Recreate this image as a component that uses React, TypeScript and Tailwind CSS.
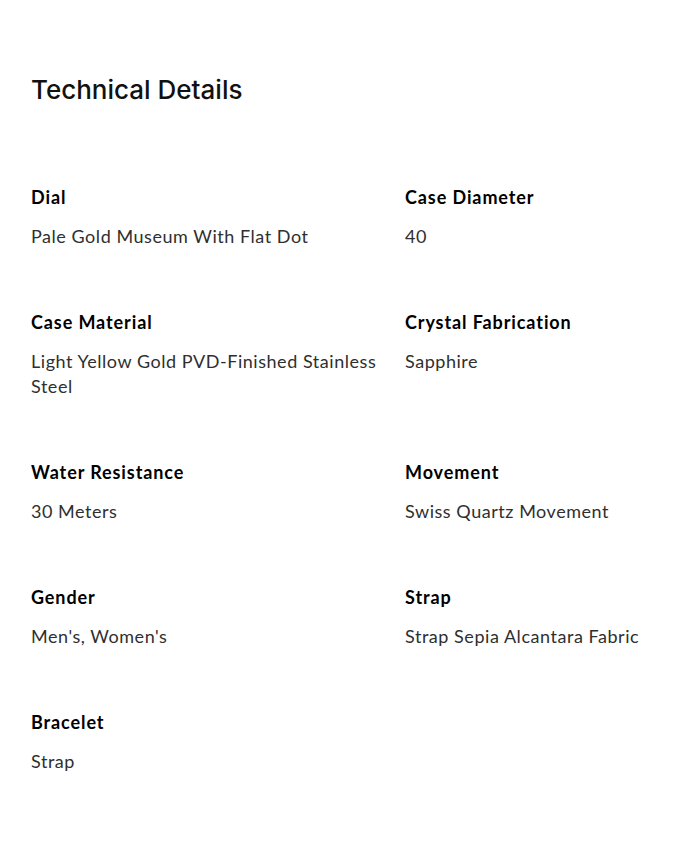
const details: Array<[string, string]> = [
  ['Dial', 'Pale Gold Museum With Flat Dot'],
  ['Case Diameter', '40'],
  ['Case Material', 'Light Yellow Gold PVD-Finished Stainless Steel'],
  ['Crystal Fabrication', 'Sapphire'],
  ['Water Resistance', '30 Meters'],
  ['Movement', 'Swiss Quartz Movement'],
  ['Gender', "Men's, Women's"],
  ['Strap', 'Strap Sepia Alcantara Fabric'],
  ['Bracelet', 'Strap'],
];

export default function App() {
  return (
    <div className="min-h-[850px] w-[700px] bg-white pl-[31px] pr-5 pt-[74px] font-['Lato',sans-serif]">
      <h2 className="font-['Inter',sans-serif] text-[26px] font-medium leading-8 text-[#111]">Technical Details</h2>

      <dl className="mt-[79px] grid grid-cols-[350px_1fr] gap-x-6 gap-y-[61px]">
        {details.map(([label, value]) => (
          <div key={label}>
            <dt className="text-[18px] font-bold leading-[25px] tracking-[0.05em] text-black">{label}</dt>
            <dd className="mt-[14px] text-[18px] leading-[25px] tracking-[0.03em] text-[#2f2f2f]">{value}</dd>
          </div>
        ))}
      </dl>
    </div>
  );
}
